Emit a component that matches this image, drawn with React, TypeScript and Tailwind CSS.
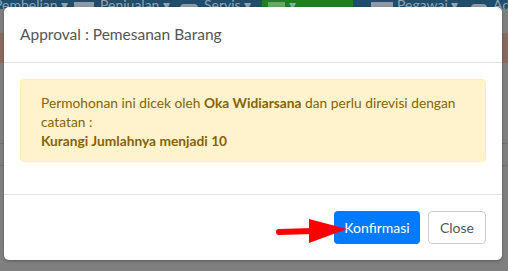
import React from "react";

export default function App() {
  return (
    <div className="relative w-[508px] h-[271px] overflow-hidden bg-[#7f7f7f]" style={{ fontFamily: 'Lato, "Open Sans", sans-serif' }}>
      {/* background page (dimmed) */}
      <div className="flex h-[9px] items-end bg-[#1f4d6b] text-[14px] leading-none text-[#8fa5b5] overflow-hidden">
        <div className="flex items-end -mb-[3px] -ml-[6px]">
          <span className="w-[80px]">Pembelian ▾</span>
          <span className="flex w-[106px] items-end gap-[6px]"><span className="w-[20px] h-[10px] bg-[#8f9aa3]" />Penjualan ▾</span>
          <span className="flex w-[82px] items-end gap-[6px]"><span className="w-[18px] h-[8px] bg-[#8f9aa3] rounded-sm" />Servis ▾</span>
          <span className="flex w-[91px] items-end gap-[4px] bg-[#1e801e] px-[6px] pt-2"><span className="w-[20px] h-[10px] bg-[#6aa56a]" />Akunting ▾</span>
          <span className="flex w-[18px]" />
          <span className="flex w-[100px] items-end gap-[4px]"><span className="w-[22px] h-[10px] bg-[#8f9aa3]" />Pegawai ▾</span>
          <span className="flex items-end gap-[6px]"><span className="w-[16px] h-[8px] bg-[#8f9aa3] rounded-sm" />Admin</span>
        </div>
      </div>
      <div className="h-[24px]" />
      <div className="h-[30px] bg-[#8a6a5e]" />
      <div className="h-[80px]" />
      <div className="h-px bg-[#6f6f6f]" />
      <div className="h-[21px]" />
      <div className="h-px bg-[#6f6f6f]" />

      {/* modal */}
      <div className="absolute left-[4px] top-[7px] w-[498px] rounded-[5px] bg-white shadow-[0_1px_3px_rgba(0,0,0,0.3)]">
        <div className="flex h-[56px] items-center border-b border-[#e3e3e6] px-4">
          <h5 className="text-[15.5px] text-[#555555]">Approval : Pemesanan Barang</h5>
        </div>
        <div className="px-4 pt-4 pb-4">
          <div className="mb-4 h-[83px] rounded-[4px] border border-[#ffeeba] bg-[#fff3cd] px-5 pt-[13px] text-[13.75px] leading-[19px] text-[#856404]">
            Permohonan ini dicek oleh <b>Oka Widiarsana</b> dan perlu direvisi dengan
            <br />
            catatan :
            <br />
            <b>Kurangi Jumlahnya menjadi 10</b>
          </div>
        </div>
        <div className="flex justify-end gap-2 border-t border-[#e3e3e6] p-4">
          <button className="h-[33px] w-[86px] rounded-[4px] bg-[#007bff] text-[14px] text-white">Konfirmasi</button>
          <button className="h-[33px] w-[58px] rounded-[4px] border border-[#cccccc] bg-white text-[14px] text-[#555555]">Close</button>
        </div>
      </div>

      {/* red arrow annotation */}
      <svg className="absolute left-[274px] top-[216px]" width="76" height="30" viewBox="0 0 76 30">
        <line x1="5" y1="16" x2="40" y2="15" stroke="#ff0000" strokeWidth="6" strokeLinecap="round" />
        <polygon points="35,3 73,13 35,27" fill="#ff0000" />
      </svg>
    </div>
  );
}
